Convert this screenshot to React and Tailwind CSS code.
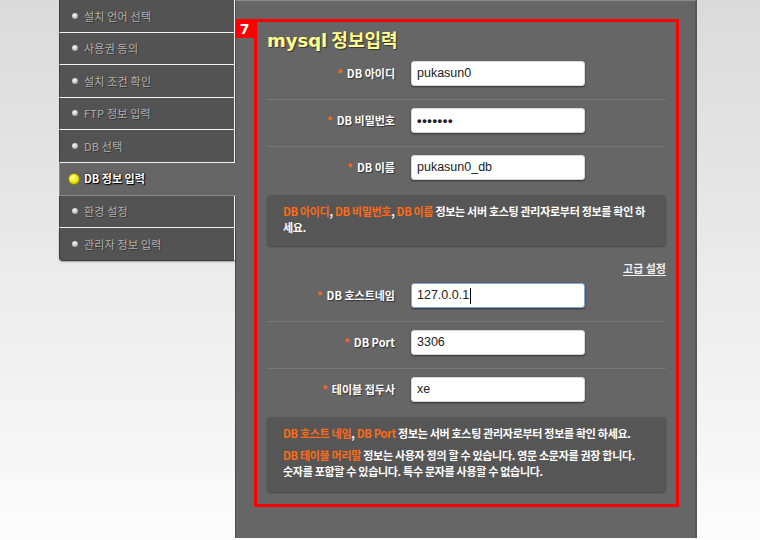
import React from "react";

const KR = { fontFamily: '"Noto Sans CJK KR", "Noto Sans", sans-serif' };

const navItems = [
  "설치 언어 선택",
  "사용권 동의",
  "설치 조건 확인",
  "FTP 정보 입력",
  "DB 선택",
  "DB 정보 입력",
  "환경 설정",
  "관리자 정보 입력",
];

function NavItem({ label, active, last }) {
  if (active) {
    return (
      <div className="h-[33px] flex items-center pl-[8px] bg-[#656565] border-l border-[#4a4a4a] border-b border-[#8a8a8a] mr-[-1px]">
        <span className="w-[12px] h-[12px] rounded-full bg-[radial-gradient(circle_at_40%_35%,#ffffa8,#eee600_55%,#a89a00)] border border-[#8a7f00] mr-[4px]" />
        <span className="text-[11px] font-bold text-white [text-shadow:0_0_2px_#000,1px_1px_1px_#000]">
          {label}
        </span>
      </div>
    );
  }
  return (
    <div
      className={
        "h-[32.5px] flex items-center pl-[12px] bg-[#535353] border-l border-[#3e3e3e] border-r border-r-[#f2f2f2] border-b " +
        (last
          ? "border-b-[#3a3a3a] rounded-bl-[4px] shadow-[0_1px_2px_rgba(0,0,0,0.3)]"
          : "border-b-[#f2f2f2]")
      }
    >
      <span className="w-[6px] h-[6px] rounded-full bg-[radial-gradient(circle_at_40%_35%,#ffffff,#b8b8b8_60%,#7a7a7a)] mr-[6px]" />
      <span className="text-[11px] text-[#b0b0b0] tracking-[0.2px] [text-shadow:1px_1px_0_#333]">
        {label}
      </span>
    </div>
  );
}

function Field({ label, value, border = true, focused, password }) {
  return (
    <div
      className={
        "h-[47px] flex items-start pt-[8px] " +
        (border ? "border-b border-dotted border-[#858585]" : "")
      }
    >
      <div className="w-[128px] h-[25px] flex items-center justify-end">
        <span className="text-[#ff6a13] text-[11px] font-bold mr-[4px]">*</span>
        <span className="text-[11px] font-bold text-white [text-shadow:1px_1px_1px_#333]">
          {label}
        </span>
      </div>
      <div
        className={
          "ml-[16px] w-[174px] h-[25px] bg-white rounded-[3px] flex items-center pl-[5px] shadow-[0_1px_2px_rgba(0,0,0,0.5)] " +
          (focused ? "border border-[#7fa8d6]" : "border border-[#d8d8d8]")
        }
      >
        <span
          className={"text-[#222] " + (password ? "font-bold tracking-[0.6px]" : "")}
          style={{ fontFamily: '"Liberation Sans", "DejaVu Sans", sans-serif', fontSize: password ? 13 : 12.5 }}
        >
          {value}
        </span>
        {focused && <span className="w-px h-[16px] bg-black ml-[1px]" />}
      </div>
    </div>
  );
}

const O = ({ children }) => <span className="text-[#ff6a13]">{children}</span>;

export default function App() {
  return (
    <div
      className="w-[760px] h-[540px] flex bg-gradient-to-b from-[#dadada] to-[#fcfcfc] overflow-hidden"
      style={KR}
    >
      <div className="w-[59px] shrink-0" />
      <nav className="w-[176px] shrink-0 self-start relative z-10">
        {navItems.map((n, i) => (
          <NavItem key={n} label={n} active={i === 5} last={i === navItems.length - 1} />
        ))}
      </nav>
      <main className="w-[462px] h-[538px] shrink-0 bg-[#666666] border-l border-[#4c4c4c] border-r-2 border-r-[#555] border-t border-t-[#8a8a8a] pt-[18px] pl-[18px]">
        <div className="relative w-[425px] h-[488px] border-[3px] border-[#ff0000] px-[10px]">
          <div className="absolute -top-[3px] -left-[22px] w-[19px] h-[19px] bg-[#ff0000] flex items-center justify-center">
            <span
              className="text-white text-[14px] font-bold leading-none"
              style={{ fontFamily: '"DejaVu Sans", sans-serif' }}
            >
              7
            </span>
          </div>
          <div className="h-[31px] pt-[5px]">
            <h1 className="text-[18px] leading-[24px] font-bold text-[#ffff8e] [text-shadow:1px_1px_1px_#333]">
              <span style={{ fontFamily: '"DejaVu Sans", sans-serif' }}>mysql</span> 정보입력
            </h1>
          </div>
          <Field label="DB 아이디" value="pukasun0" />
          <Field label="DB 비밀번호" value="•••••••" password />
          <Field label="DB 이름" value="pukasun0_db" border={false} />
          <div className="mt-[1px] h-[51px] rounded-[4px] bg-[#565656] shadow-[0_1px_2px_rgba(0,0,0,0.3)] px-[16px] pt-[8px] text-[11px] leading-[16px] font-bold text-white tracking-[-0.3px] whitespace-nowrap">
            <O>DB 아이디</O>, <O>DB 비밀번호</O>, <O>DB 이름</O> 정보는 서버 호스팅 관리자로부터 정보를 확인 하
            <br />
            세요.
          </div>
          <div className="h-[29px] flex items-end justify-end">
            <span className="text-[11px] leading-[14px] font-bold text-[#f0f0f0] underline underline-offset-2">
              고급 설정
            </span>
          </div>
          <Field label="DB 호스트네임" value="127.0.0.1" focused />
          <Field label="DB Port" value="3306" />
          <Field label="테이블 접두사" value="xe" border={false} />
          <div className="mt-[1px] h-[75px] rounded-[4px] bg-[#565656] shadow-[0_1px_2px_rgba(0,0,0,0.3)] px-[16px] pt-[8px] text-[11px] leading-[16px] font-bold text-white tracking-[-0.3px] whitespace-nowrap">
            <div>
              <O>DB 호스트 네임</O>, <O>DB Port</O> 정보는 서버 호스팅 관리자로부터 정보를 확인 하세요.
            </div>
            <div className="mt-[6px]">
              <O>DB 테이블 머리말</O> 정보는 사용자 정의 할 수 있습니다. 영문 소문자를 권장 합니다.
              <br />
              숫자를 포함할 수 있습니다. 특수 문자를 사용할 수 없습니다.
            </div>
          </div>
        </div>
      </main>
    </div>
  );
}
